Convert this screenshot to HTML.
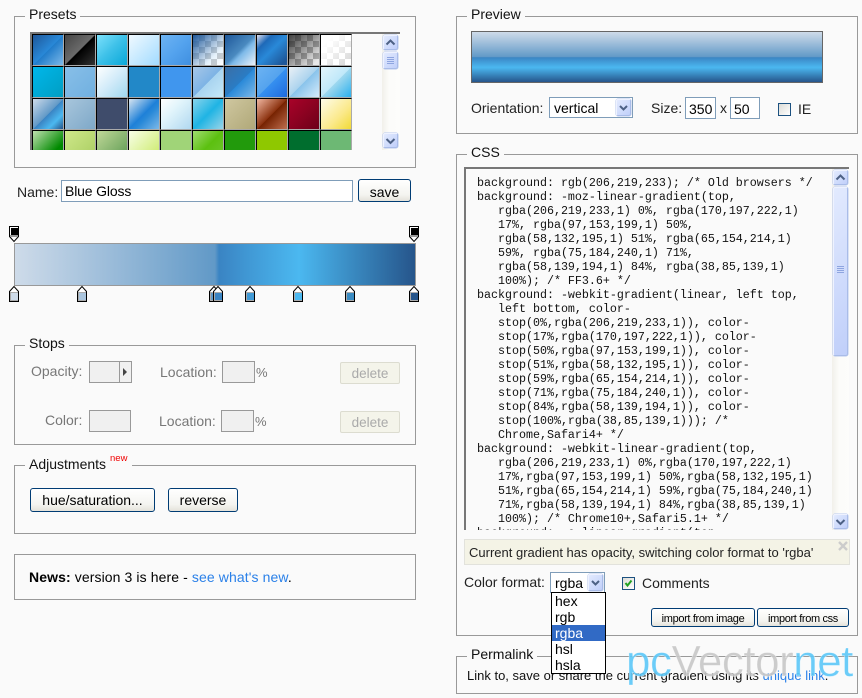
<!DOCTYPE html>
<html><head><meta charset="utf-8"><style>
html,body{margin:0;padding:0}
body{width:862px;height:698px;background:#fafafa;position:relative;overflow:hidden;font:14px/16px "Liberation Sans",sans-serif;color:#000}
div,span.a,a.a{position:absolute;box-sizing:border-box}
.f{border:1px solid #999}
.l{background:#fafafa;padding:0 4px;white-space:nowrap;height:16px;line-height:16px;color:#111}
.t{white-space:nowrap;height:16px;line-height:16px}
.g{color:#777}
.i{background:#fff;border:1px solid #7f9db9;padding-left:3px;line-height:21px;white-space:nowrap}
.d{background:#f0f0f0;border:1px solid #999}
.b{border:1px solid #003c74;border-radius:3px;background:linear-gradient(#fff,#f4f4f0 70%,#e4e2da);text-align:center;white-space:nowrap}
.x{background:#f4f4ea;border:1px solid #dcdcd0;border-radius:2px;color:#aaa;text-align:center;line-height:21px;font-size:13.5px}
.sw{width:32px;height:32px;border:solid;border-width:1px 1px 1px 1px;border-color:#000 #aaa #aaa #000}
.sb{background:linear-gradient(90deg,#f1f0ea,#fcfcfa 40%,#fdfdfb)}
.bt{background:linear-gradient(135deg,#e2eafe,#c0cffa);border:1px solid #eef2ff;border-right-color:#a9bce8;border-bottom-color:#a9bce8;border-radius:2px;box-shadow:0 0 0 .5px #b8c8ee}
a{color:#2a80e8;text-decoration:none}
svg{position:absolute;display:block}
.c{left:11px;top:7px;font:11.67px/14px "Liberation Mono",monospace;white-space:pre;color:#111}
.m{left:551px;top:592px;width:55px;height:82px;background:#fff;border:1px solid #000;font-size:14px;z-index:5}
.m div{left:0;width:53px;height:16px;padding-left:3px;line-height:16px}
</style></head><body>

<!-- Presets -->
<div class="f" style="left:14px;top:16px;width:402px;height:152px"></div>
<div class="l" style="left:25px;top:6px">Presets</div>
<div style="left:30px;top:32px;width:370px;height:118px;background:#fafafa;border-top:2px solid #777;border-left:2px solid #777;overflow:hidden">
<div class="sw" style="left:0;top:0;background:linear-gradient(135deg,#1e5799,#2989d8 50%,#207cca 51%,#7db9e8)"></div>
<div class="sw" style="left:32px;top:0;background:linear-gradient(135deg,#444,#6b6b6b 49%,#000 51%,#333)"></div>
<div class="sw" style="left:64px;top:0;background:linear-gradient(135deg,#7ce0fb,#3cc0e8 50%,#09a8d8)"></div>
<div class="sw" style="left:96px;top:0;background:linear-gradient(135deg,#f0f9ff,#cbebff 47%,#a1dbff)"></div>
<div class="sw" style="left:128px;top:0;background:linear-gradient(135deg,#6db3f2,#54a3ee 50%,#3f8fe0)"></div>
<div class="sw" style="left:160px;top:0;background:linear-gradient(135deg,#1e5799,rgba(125,185,232,.2) 70%,rgba(255,255,255,0)),repeating-conic-gradient(#ccc 0 25%,#fff 0 50%) 0 0/12px 12px"></div>
<div class="sw" style="left:192px;top:0;background:linear-gradient(135deg,#1e5799,#4a8ac0 50%,#7db9e8 60%,rgba(220,235,250,.5))"></div>
<div class="sw" style="left:224px;top:0;background:linear-gradient(135deg,#dde 0,#1e69b8 25%,#2989d8 50%,#1e5799 90%)"></div>
<div class="sw" style="left:256px;top:0;background:linear-gradient(135deg,rgba(30,30,30,.85),rgba(30,30,30,.1) 90%),repeating-conic-gradient(#bbb 0 25%,#fff 0 50%) 0 0/12px 12px"></div>
<div class="sw" style="left:288px;top:0;background:linear-gradient(135deg,#fff 20%,rgba(255,255,255,.2)),repeating-conic-gradient(#ccc 0 25%,#fff 0 50%) 0 0/12px 12px"></div>

<div class="sw" style="left:0;top:32px;background:linear-gradient(135deg,#00b7ea,#009ec3)"></div>
<div class="sw" style="left:32px;top:32px;background:linear-gradient(135deg,#88bfe8,#70b0e0)"></div>
<div class="sw" style="left:64px;top:32px;background:linear-gradient(135deg,#feffff,#d2ebf9 50%,#a0d8ef)"></div>
<div class="sw" style="left:96px;top:32px;background:#2288c8"></div>
<div class="sw" style="left:128px;top:32px;background:#4096ee"></div>
<div class="sw" style="left:160px;top:32px;background:linear-gradient(135deg,#a7c7e8,#7db3e5 50%,#a9d4f0 51%,#c4e8f8)"></div>
<div class="sw" style="left:192px;top:32px;background:linear-gradient(135deg,#3b6ea5,#2a7cc4 50%,#2989d8 51%,#7db9e8)"></div>
<div class="sw" style="left:224px;top:32px;background:linear-gradient(135deg,#6db3f2,#54a3ee 50%,#3690f0 51%,#1e69de)"></div>
<div class="sw" style="left:256px;top:32px;background:linear-gradient(135deg,#ebf1f6,#abd3ee 50%,#89c3eb 51%,#d5ebfb)"></div>
<div class="sw" style="left:288px;top:32px;background:linear-gradient(135deg,#e4f5fc,#bfe8f9 50%,#9fd8ef 51%,#2ab0ed)"></div>

<div class="sw" style="left:0;top:64px;background:linear-gradient(135deg,#cedbe9,#6199c7 50%,#3a84c3 51%,#4bb8f0 75%,#26558b)"></div>
<div class="sw" style="left:32px;top:64px;background:linear-gradient(135deg,#a8c6dc,#7ea8c8)"></div>
<div class="sw" style="left:64px;top:64px;background:#3f4c6b"></div>
<div class="sw" style="left:96px;top:64px;background:linear-gradient(135deg,#d8e4f0,#1e80d8 50%,#2989d8 60%,#7db9e8)"></div>
<div class="sw" style="left:128px;top:64px;background:linear-gradient(135deg,#fff,#e0f4fb 40%,#b0d8f0)"></div>
<div class="sw" style="left:160px;top:64px;background:linear-gradient(135deg,#88d4ec,#1fb4e4 50%,#98d4e8)"></div>
<div class="sw" style="left:192px;top:64px;background:linear-gradient(135deg,#cfc7a0,#b0a878)"></div>
<div class="sw" style="left:224px;top:64px;background:linear-gradient(135deg,#f0b7a1,#8c3310 50%,#752201 51%,#bf6e4e)"></div>
<div class="sw" style="left:256px;top:64px;background:linear-gradient(135deg,#a90329,#8f0222 44%,#6d0019)"></div>
<div class="sw" style="left:288px;top:64px;background:linear-gradient(135deg,#fefcea,#fbe98a 60%,#f1da36)"></div>

<div class="sw" style="left:0;top:96px;background:linear-gradient(135deg,#c0e0b0,#008a00 70%)"></div>
<div class="sw" style="left:32px;top:96px;background:linear-gradient(135deg,#cfe88a,#a8cc60)"></div>
<div class="sw" style="left:64px;top:96px;background:linear-gradient(135deg,#c0d898,#5a9850)"></div>
<div class="sw" style="left:96px;top:96px;background:linear-gradient(135deg,#f8ffe8,#c8e860)"></div>
<div class="sw" style="left:128px;top:96px;background:#a0d478"></div>
<div class="sw" style="left:160px;top:96px;background:linear-gradient(135deg,#a0dc70,#5cc010 50%,#70c830)"></div>
<div class="sw" style="left:192px;top:96px;background:#229a0c"></div>
<div class="sw" style="left:224px;top:96px;background:#8fc800"></div>
<div class="sw" style="left:256px;top:96px;background:#006e2e"></div>
<div class="sw" style="left:288px;top:96px;background:#6db874"></div>

<div class="sb" style="left:350px;top:0;width:18px;height:117px"></div>
<div class="bt" style="left:351px;top:1px;width:15px;height:15px"></div>
<div class="bt" style="left:351px;top:18px;width:15px;height:17px"></div>
<div class="bt" style="left:351px;top:99px;width:15px;height:15px"></div>
<svg style="left:351px;top:1px" width="15" height="15"><path d="M3.5 9.5L7.5 5.5L11.5 9.5" fill="none" stroke="#4d6185" stroke-width="2"/></svg>
<svg style="left:351px;top:18px" width="15" height="17"><path d="M4 5.5H11M4 7.5H11M4 9.5H11M4 11.5H11" stroke="#8ea5e0" stroke-width="1"/></svg>
<svg style="left:351px;top:99px" width="15" height="15"><path d="M3.5 6L7.5 10L11.5 6" fill="none" stroke="#4d6185" stroke-width="2"/></svg>
</div>

<!-- Name -->
<div class="t" style="left:17px;top:184px;color:#222">Name:</div>
<div class="i" style="left:61px;top:180px;width:292px;height:22px;letter-spacing:-.15px">Blue Gloss</div>
<div class="b" style="left:358px;top:179px;width:53px;height:23px;line-height:24px">save</div>

<!-- Gradient bar -->
<div style="left:14px;top:243px;width:402px;height:43px;border:1px solid #999;background:linear-gradient(90deg,#cedbe9 0%,#aac5de 17%,#6199c7 50%,#3a84c3 51%,#419ad6 59%,#4bb8f0 71%,#3a8bc2 84%,#26558b 100%)"></div>
<svg style="left:0;top:220px" width="430" height="90">
<defs>
<path id="up" d="M.5 5.5L5 .5L9.5 5.5V15.5H.5Z" fill="#fff" stroke="#000"/>
<path id="dn" d="M.5 .5H9.5V10.5L5 15.5L.5 10.5Z" fill="#fff" stroke="#000"/>
</defs>
<g transform="translate(9,6)"><use href="#dn"/><rect x="2" y="2" width="7" height="7" fill="#000"/><rect x="1" y="9" width="8" height="2" fill="#999"/></g>
<g transform="translate(409,6)"><use href="#dn"/><rect x="2" y="2" width="7" height="7" fill="#000"/><rect x="1" y="9" width="8" height="2" fill="#999"/></g>
<g transform="translate(9,66)"><use href="#up"/><rect x="1" y="6" width="8" height="9" fill="#aaa"/><rect x="2" y="7" width="7" height="7" fill="#cedbe9"/></g>
<g transform="translate(77,66)"><use href="#up"/><rect x="1" y="6" width="8" height="9" fill="#aaa"/><rect x="2" y="7" width="7" height="7" fill="#aac5de"/></g>
<g transform="translate(209,66)"><use href="#up"/><rect x="1" y="6" width="8" height="9" fill="#aaa"/><rect x="2" y="7" width="7" height="7" fill="#6199c7"/></g>
<g transform="translate(213,66)"><use href="#up"/><rect x="1" y="6" width="8" height="9" fill="#aaa"/><rect x="2" y="7" width="7" height="7" fill="#3a84c3"/></g>
<g transform="translate(245,66)"><use href="#up"/><rect x="1" y="6" width="8" height="9" fill="#aaa"/><rect x="2" y="7" width="7" height="7" fill="#419ad6"/></g>
<g transform="translate(293,66)"><use href="#up"/><rect x="1" y="6" width="8" height="9" fill="#aaa"/><rect x="2" y="7" width="7" height="7" fill="#4bb8f0"/></g>
<g transform="translate(345,66)"><use href="#up"/><rect x="1" y="6" width="8" height="9" fill="#aaa"/><rect x="2" y="7" width="7" height="7" fill="#3a8bc2"/></g>
<g transform="translate(409,66)"><use href="#up"/><rect x="1" y="6" width="8" height="9" fill="#aaa"/><rect x="2" y="7" width="7" height="7" fill="#26558b"/></g>
</svg>

<!-- Stops -->
<div class="f" style="left:14px;top:345px;width:402px;height:100px"></div>
<div class="l" style="left:25px;top:335px">Stops</div>
<div class="t g" style="left:31px;top:363px">Opacity:</div>
<div class="d" style="left:89px;top:361px;width:43px;height:22px"></div>
<div style="left:119px;top:361px;width:1px;height:22px;background:#999"></div>
<svg style="left:123px;top:368px" width="5" height="8"><path d="M0 0L4 4L0 8Z" fill="#444"/></svg>
<div class="t g" style="left:160px;top:364px">Location:</div>
<div class="d" style="left:222px;top:361px;width:33px;height:22px"></div>
<div class="t g" style="left:256px;top:365px;font-size:13px">%</div>
<div class="x" style="left:340px;top:362px;width:60px;height:22px">delete</div>
<div class="t g" style="left:45px;top:412px">Color:</div>
<div class="d" style="left:89px;top:410px;width:42px;height:22px"></div>
<div class="t g" style="left:159px;top:413px">Location:</div>
<div class="d" style="left:221px;top:410px;width:33px;height:22px"></div>
<div class="t g" style="left:255px;top:414px;font-size:13px">%</div>
<div class="x" style="left:340px;top:411px;width:60px;height:22px">delete</div>

<!-- Adjustments -->
<div class="f" style="left:14px;top:465px;width:402px;height:69px"></div>
<div class="l" style="left:25px;top:456px;width:107px">Adjustments</div>
<div class="t" style="left:110px;top:451px;font-size:9.5px;color:#f00000;line-height:16px">new</div>
<div class="b" style="left:30px;top:488px;width:125px;height:24px;line-height:23px">hue/saturation...</div>
<div class="b" style="left:168px;top:488px;width:70px;height:24px;line-height:23px">reverse</div>

<!-- News -->
<div class="f" style="left:14px;top:554px;width:402px;height:46px"></div>
<div class="t" style="left:29px;top:569px;letter-spacing:.1px"><b>News:</b> version 3 is here - <a>see what's new</a>.</div>

<!-- Preview -->
<div class="f" style="left:456px;top:16px;width:402px;height:118px"></div>
<div class="l" style="left:467px;top:6px">Preview</div>
<div style="left:471px;top:31px;width:352px;height:52px;border:1px solid #666;background:linear-gradient(#cedbe9 0%,#aac5de 17%,#6199c7 50%,#3a84c3 51%,#419ad6 59%,#4bb8f0 71%,#3a8bc2 84%,#26558b 100%)"></div>
<div class="t" style="left:471px;top:100px;color:#222">Orientation:</div>
<div class="i" style="left:549px;top:97px;width:84px;height:21px;padding-left:4px;line-height:21px">vertical</div>
<div class="bt" style="left:616px;top:99px;width:15px;height:17px"></div>
<svg style="left:616px;top:99px" width="15" height="17"><path d="M4 7L7.5 10.5L11 7" fill="none" stroke="#4d6185" stroke-width="2"/></svg>
<div class="t" style="left:651px;top:100px;color:#222">Size:</div>
<div class="i" style="left:685px;top:97px;width:31px;height:22px;line-height:22px">350</div>
<div class="t" style="left:720px;top:100px;color:#222">x</div>
<div class="i" style="left:730px;top:97px;width:30px;height:22px;line-height:22px">50</div>
<div style="left:778px;top:103px;width:13px;height:13px;border:1px solid #1c5180;background:linear-gradient(135deg,#dcdcd7,#fff)"></div>
<div class="t" style="left:798px;top:101px;color:#222">IE</div>

<!-- CSS -->
<div class="f" style="left:456px;top:154px;width:402px;height:482px"></div>
<div class="l" style="left:467px;top:144px">CSS</div>
<div style="left:464px;top:167px;width:385px;height:363px;border-top:2px solid #777;border-left:2px solid #777;overflow:hidden;background:#fafafa">
<div class="c">background: rgb(206,219,233); /* Old browsers */
background: -moz-linear-gradient(top,
   rgba(206,219,233,1) 0%, rgba(170,197,222,1)
   17%, rgba(97,153,199,1) 50%,
   rgba(58,132,195,1) 51%, rgba(65,154,214,1)
   59%, rgba(75,184,240,1) 71%,
   rgba(58,139,194,1) 84%, rgba(38,85,139,1)
   100%); /* FF3.6+ */
background: -webkit-gradient(linear, left top,
   left bottom, color-
   stop(0%,rgba(206,219,233,1)), color-
   stop(17%,rgba(170,197,222,1)), color-
   stop(50%,rgba(97,153,199,1)), color-
   stop(51%,rgba(58,132,195,1)), color-
   stop(59%,rgba(65,154,214,1)), color-
   stop(71%,rgba(75,184,240,1)), color-
   stop(84%,rgba(58,139,194,1)), color-
   stop(100%,rgba(38,85,139,1))); /*
   Chrome,Safari4+ */
background: -webkit-linear-gradient(top,
   rgba(206,219,233,1) 0%,rgba(170,197,222,1)
   17%,rgba(97,153,199,1) 50%,rgba(58,132,195,1)
   51%,rgba(65,154,214,1) 59%,rgba(75,184,240,1)
   71%,rgba(58,139,194,1) 84%,rgba(38,85,139,1)
   100%); /* Chrome10+,Safari5.1+ */
background: -o-linear-gradient(top,</div>
<div class="sb" style="left:366px;top:0;width:18px;height:361px"></div>
<div class="bt" style="left:367px;top:1px;width:15px;height:15px"></div>
<div class="bt" style="left:367px;top:18px;width:15px;height:169px"></div>
<div class="bt" style="left:367px;top:345px;width:15px;height:15px"></div>
<svg style="left:367px;top:1px" width="15" height="15"><path d="M3.5 9.5L7.5 5.5L11.5 9.5" fill="none" stroke="#4d6185" stroke-width="2"/></svg>
<svg style="left:367px;top:92px" width="15" height="17"><path d="M4 5.5H11M4 7.5H11M4 9.5H11M4 11.5H11" stroke="#8ea5e0"/></svg>
<svg style="left:367px;top:345px" width="15" height="15"><path d="M3.5 6L7.5 10L11.5 6" fill="none" stroke="#4d6185" stroke-width="2"/></svg>
</div>

<div style="left:464px;top:539px;width:386px;height:26px;background:#f4f3e6;border:1px solid #e2e2dc"></div>
<div class="t" style="left:469px;top:545px;color:#222;font-size:13px">Current gradient has opacity, switching color format to 'rgba'</div>
<svg style="left:838px;top:541px" width="10" height="10"><path d="M1 1L9 9M9 1L1 9" stroke="#ccc" stroke-width="2.4"/></svg>
<div class="t" style="left:464px;top:574px;color:#222">Color format:</div>
<div class="i" style="left:550px;top:572px;width:55px;height:21px;line-height:20px;padding-left:4px">rgba</div>
<div class="bt" style="left:588px;top:574px;width:15px;height:17px"></div>
<svg style="left:588px;top:574px" width="15" height="17"><path d="M4 7L7.5 10.5L11 7" fill="none" stroke="#4d6185" stroke-width="2"/></svg>
<div style="left:622px;top:577px;width:13px;height:13px;border:1px solid #1c5180;background:linear-gradient(135deg,#dcdcd7,#fff)"></div>
<svg style="left:623px;top:578px" width="11" height="11"><path d="M2.5 5L4.5 7.5L8.5 2.5" fill="none" stroke="#21a121" stroke-width="2"/></svg>
<div class="t" style="left:642px;top:575px;color:#222">Comments</div>
<div class="m">
<div style="top:0">hex</div>
<div style="top:16px">rgb</div>
<div style="top:32px;background:#316ac5;color:#fff">rgba</div>
<div style="top:48px">hsl</div>
<div style="top:64px">hsla</div>
</div>
<div class="b" style="left:651px;top:608px;width:104px;height:19px;line-height:20px;font-size:11px;letter-spacing:-.35px">import from image</div>
<div class="b" style="left:757px;top:608px;width:92px;height:19px;line-height:20px;font-size:11px;letter-spacing:-.35px">import from css</div>

<!-- Permalink -->
<div class="f" style="left:456px;top:656px;width:402px;height:38px"></div>
<div class="l" style="left:467px;top:646px">Permalink</div>
<div class="t" style="left:467px;top:668px;font-size:13px;color:#111">Link to, save or share the current gradient using its <a>unique link</a>.</div>

<!-- Watermark -->
<div style="left:626px;top:632px;font:44px/60px 'Liberation Sans',sans-serif;letter-spacing:-.5px;white-space:nowrap;z-index:6;-webkit-text-stroke:.6px rgba(255,255,255,.6);opacity:.9"><span style="color:#5cc8f8">pc</span><span style="color:#c8c8c8">Vector</span><span style="color:#5cc8f8">net</span></div>
</body></html>
